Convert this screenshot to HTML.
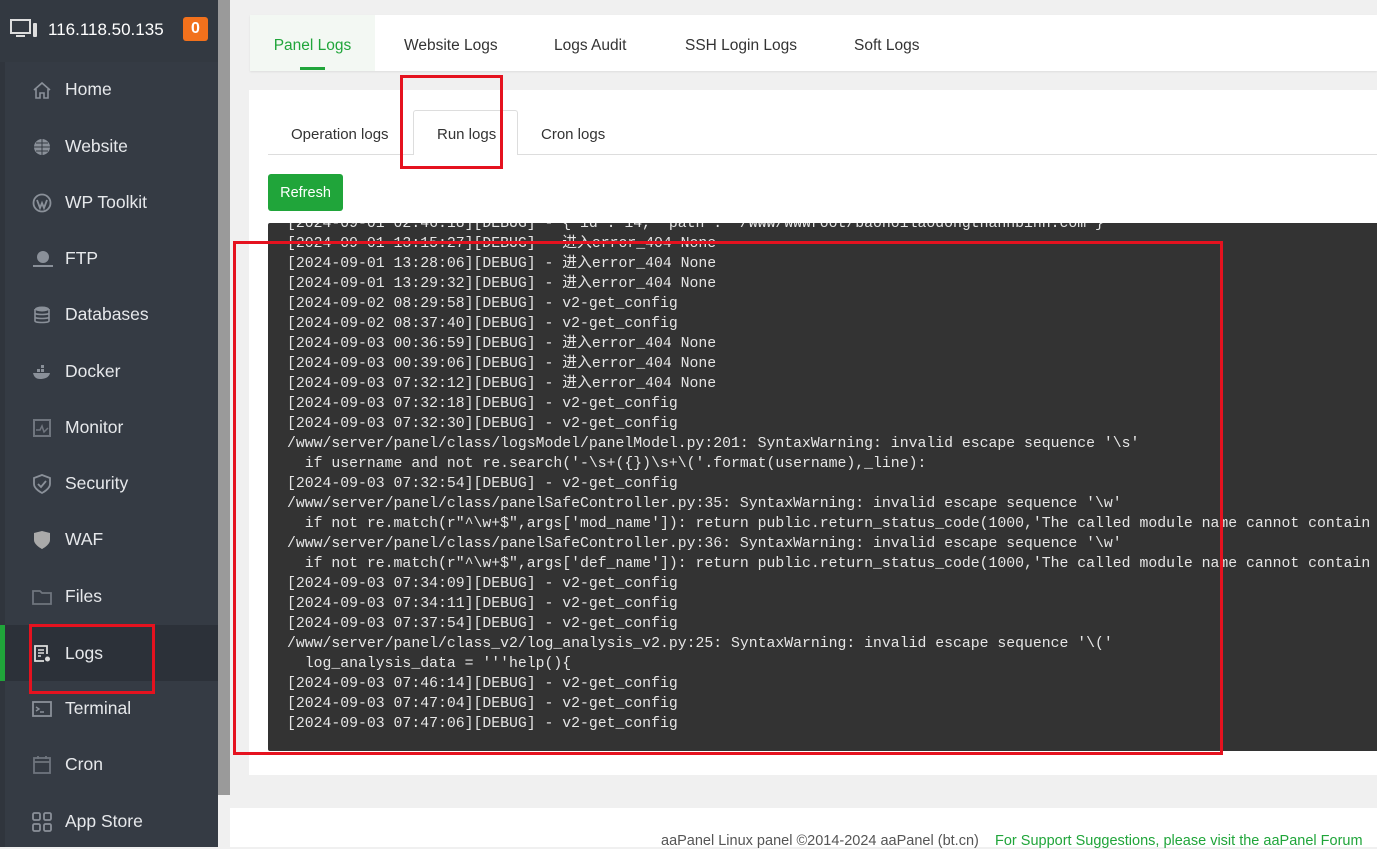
<!DOCTYPE html>
<html><head><meta charset="utf-8"><style>
*{margin:0;padding:0;box-sizing:border-box}
body{width:1377px;height:847px;overflow:hidden;background:#f0f0f0;font-family:"Liberation Sans","Noto Sans CJK SC",sans-serif;position:relative}
.side{position:absolute;left:0;top:0;width:218px;height:847px;background:#353b44}
.strip{position:absolute;left:0;top:62px;width:5px;height:785px;background:#30353d}
.hdr{position:absolute;left:0;top:0;width:218px;height:62px;background:#333941;color:#fff;font-size:17px}
.hdr .ip{position:absolute;left:48px;top:20px}
.badge{position:absolute;left:183px;top:17px;width:25px;height:24px;background:#f2711c;border-radius:3px;color:#fff;font-weight:bold;font-size:16px;text-align:center;line-height:24px}
.item{position:absolute;left:5px;width:213px;height:56px;color:#e6e8eb;font-size:17.5px}
.item span{position:absolute;left:60px;top:18px}
.item svg{position:absolute;left:27px;top:19px}
.item.act{background:#2c3139;left:0;width:218px;border-left:5px solid #20a53a}
.scroll{position:absolute;left:218px;top:0;width:12px;height:800px;background:#9a9a9a}
.scrollb{position:absolute;left:218px;top:795px;width:12px;height:52px;background:#f0f0f0}
.tabs{position:absolute;left:250px;top:15px;width:1127px;height:56px;background:#fff;box-shadow:0 1px 2px rgba(0,0,0,.08)}
.tabs div{position:absolute;top:0;height:56px;line-height:61px;font-size:15.5px;color:#333}
.card{position:absolute;left:249px;top:90px;width:1128px;height:685px;background:#fff}
.sub{position:absolute;font-size:15px;color:#333}
.log{position:absolute;left:268px;top:223px;width:1109px;height:528px;background:#333;overflow:hidden;border-radius:2px 0 0 2px}
.log pre{position:absolute;left:19px;top:-9px;font-family:"Liberation Mono","Noto Sans CJK SC",monospace;font-size:14.8px;line-height:20px;color:#e6e6e6;white-space:pre}
.red{position:absolute;border:3px solid #e5121f}
.foot{position:absolute;left:230px;top:808px;width:1147px;height:39px;background:#fff;font-size:14.5px;color:#555}
</style></head><body>
<div class="side"></div><div class="strip"></div>
<div class="hdr">
<svg style="position:absolute;left:10px;top:19px" width="28" height="20" viewBox="0 0 28 20"><rect x="1" y="1" width="19" height="13" fill="none" stroke="#ddd" stroke-width="2"/><rect x="6" y="16" width="9" height="2" fill="#ddd"/><rect x="23" y="4" width="4" height="14" rx="1" fill="#ddd"/></svg>
<span class="ip">116.118.50.135</span><div class="badge">0</div></div>

<div class="item" style="top:61px"><svg width="20" height="20" viewBox="0 0 20 20"><path d="M2 10 L10 3 L18 10 M4 9 V18 H8 V13 H12 V18 H16 V9" fill="none" stroke="#8a9099" stroke-width="1.6"/></svg><span>Home</span></div>
<div class="item" style="top:118px"><svg width="20" height="20" viewBox="0 0 20 20"><circle cx="10" cy="10" r="8" fill="#8a9099"/><path d="M2 10H18M10 2V18M4 6H16M4 14H16" stroke="#353b44" stroke-width="1"/></svg><span>Website</span></div>
<div class="item" style="top:174px"><svg width="20" height="20" viewBox="0 0 20 20"><circle cx="10" cy="10" r="8.5" fill="none" stroke="#8a9099" stroke-width="1.8"/><path d="M5 7 L8 15 L10 10 L12 15 L15 7" fill="none" stroke="#8a9099" stroke-width="1.8"/></svg><span>WP Toolkit</span></div>
<div class="item" style="top:230px"><svg width="22" height="20" viewBox="0 0 22 20"><circle cx="11" cy="8" r="6" fill="#8a9099"/><rect x="1" y="16" width="20" height="2" fill="#8a9099"/></svg><span>FTP</span></div>
<div class="item" style="top:286px"><svg width="20" height="20" viewBox="0 0 20 20"><ellipse cx="10" cy="4" rx="7" ry="2.5" fill="#8a9099"/><path d="M3 4V16C3 18 17 18 17 16V4M3 8C3 10 17 10 17 8M3 12C3 14 17 14 17 12" fill="none" stroke="#8a9099" stroke-width="1.6"/></svg><span>Databases</span></div>
<div class="item" style="top:343px"><svg width="20" height="20" viewBox="0 0 20 20"><path d="M1 11H18C17 16 12 17 8 17C4 17 2 15 1 11Z" fill="#8a9099"/><rect x="5" y="7" width="3" height="3" fill="#8a9099"/><rect x="9" y="7" width="3" height="3" fill="#8a9099"/><rect x="9" y="3" width="3" height="3" fill="#8a9099"/></svg><span>Docker</span></div>
<div class="item" style="top:399px"><svg width="20" height="20" viewBox="0 0 20 20"><rect x="2" y="2" width="16" height="16" fill="none" stroke="#6f757e" stroke-width="2"/><path d="M4 12L8 12L10 8L12 14L16 10" fill="none" stroke="#6f757e" stroke-width="1.5"/></svg><span>Monitor</span></div>
<div class="item" style="top:455px"><svg width="20" height="20" viewBox="0 0 20 20"><path d="M10 1L18 4V10C18 15 10 19 10 19C10 19 2 15 2 10V4Z" fill="none" stroke="#8a9099" stroke-width="1.8"/><path d="M6 10L9 13L14 7" fill="none" stroke="#8a9099" stroke-width="1.8"/></svg><span>Security</span></div>
<div class="item" style="top:511px"><svg width="20" height="20" viewBox="0 0 20 20"><path d="M10 1L18 3V10C18 15 10 19 10 19C10 19 2 15 2 10V3Z" fill="#aaa"/></svg><span>WAF</span></div>
<div class="item" style="top:568px"><svg width="20" height="20" viewBox="0 0 20 20"><path d="M1 4H8L10 6H19V17H1Z" fill="none" stroke="#6f757e" stroke-width="1.8"/></svg><span>Files</span></div>
<div class="item act" style="top:625px"><svg style="left:27px" width="20" height="20" viewBox="0 0 20 20"><path d="M12 17H3V2H15V10" fill="none" stroke="#ddd" stroke-width="1.8"/><path d="M6 6H12M6 9H12M6 12H9" stroke="#ddd" stroke-width="1.5"/><circle cx="15.5" cy="15" r="2.5" fill="#ddd"/></svg><span>Logs</span></div>
<div class="item" style="top:680px"><svg width="20" height="20" viewBox="0 0 20 20"><rect x="1" y="3" width="18" height="14" fill="none" stroke="#8a9099" stroke-width="1.8"/><path d="M4 8L7 10L4 12M8 13H12" fill="none" stroke="#8a9099" stroke-width="1.4"/></svg><span>Terminal</span></div>
<div class="item" style="top:736px"><svg width="20" height="20" viewBox="0 0 20 20"><rect x="2" y="3" width="16" height="15" fill="none" stroke="#6f757e" stroke-width="1.8"/><path d="M2 7H18M6 1V4M14 1V4" stroke="#6f757e" stroke-width="1.8"/></svg><span>Cron</span></div>
<div class="item" style="top:793px"><svg width="20" height="20" viewBox="0 0 20 20"><rect x="1" y="1" width="7" height="7" rx="1.5" fill="none" stroke="#8a9099" stroke-width="1.8"/><rect x="12" y="1" width="7" height="7" rx="1.5" fill="none" stroke="#8a9099" stroke-width="1.8"/><rect x="1" y="12" width="7" height="7" rx="1.5" fill="none" stroke="#8a9099" stroke-width="1.8"/><rect x="12" y="12" width="7" height="7" rx="1.5" fill="none" stroke="#8a9099" stroke-width="1.8"/></svg><span>App Store</span></div>

<div class="scroll"></div><div class="scrollb"></div>

<div class="tabs">
<div style="left:0;width:125px;background:#f3f8f3;color:#20a53a;text-align:center">Panel Logs<span style="position:absolute;left:50px;top:52px;width:25px;height:3px;background:#20a53a"></span></div>
<div style="left:154px">Website Logs</div>
<div style="left:304px">Logs Audit</div>
<div style="left:435px">SSH Login Logs</div>
<div style="left:604px">Soft Logs</div>
</div>

<div class="card"></div>
<div style="position:absolute;left:268px;top:154px;width:1109px;height:1px;background:#ddd"></div>
<div style="position:absolute;left:413px;top:110px;width:105px;height:45px;background:#fff;border:1px solid #ddd;border-bottom:none;border-radius:3px 3px 0 0"></div>
<div class="sub" style="left:291px;top:126px">Operation logs</div>
<div class="sub" style="left:437px;top:126px">Run logs</div>
<div class="sub" style="left:541px;top:126px">Cron logs</div>
<div style="position:absolute;left:268px;top:174px;width:75px;height:37px;background:#20a53a;border-radius:3px;color:#fff;font-size:14.5px;text-align:center;line-height:38px">Refresh</div>

<div class="log"><pre>[2024-09-01 02:46:18][DEBUG] - {'id': 14, 'path': '/www/wwwroot/baohoilaodongthanhbinh.com'}
[2024-09-01 13:15:27][DEBUG] - 进入error_404 None
[2024-09-01 13:28:06][DEBUG] - 进入error_404 None
[2024-09-01 13:29:32][DEBUG] - 进入error_404 None
[2024-09-02 08:29:58][DEBUG] - v2-get_config
[2024-09-02 08:37:40][DEBUG] - v2-get_config
[2024-09-03 00:36:59][DEBUG] - 进入error_404 None
[2024-09-03 00:39:06][DEBUG] - 进入error_404 None
[2024-09-03 07:32:12][DEBUG] - 进入error_404 None
[2024-09-03 07:32:18][DEBUG] - v2-get_config
[2024-09-03 07:32:30][DEBUG] - v2-get_config
/www/server/panel/class/logsModel/panelModel.py:201: SyntaxWarning: invalid escape sequence '\s'
  if username and not re.search('-\s+({})\s+\('.format(username),_line):
[2024-09-03 07:32:54][DEBUG] - v2-get_config
/www/server/panel/class/panelSafeController.py:35: SyntaxWarning: invalid escape sequence '\w'
  if not re.match(r"^\w+$",args['mod_name']): return public.return_status_code(1000,'The called module name cannot contain
/www/server/panel/class/panelSafeController.py:36: SyntaxWarning: invalid escape sequence '\w'
  if not re.match(r"^\w+$",args['def_name']): return public.return_status_code(1000,'The called module name cannot contain
[2024-09-03 07:34:09][DEBUG] - v2-get_config
[2024-09-03 07:34:11][DEBUG] - v2-get_config
[2024-09-03 07:37:54][DEBUG] - v2-get_config
/www/server/panel/class_v2/log_analysis_v2.py:25: SyntaxWarning: invalid escape sequence '\('
  log_analysis_data = '''help(){
[2024-09-03 07:46:14][DEBUG] - v2-get_config
[2024-09-03 07:47:04][DEBUG] - v2-get_config
[2024-09-03 07:47:06][DEBUG] - v2-get_config</pre></div>

<div class="foot"><span style="position:absolute;left:431px;top:25px">aaPanel Linux panel ©2014-2024 aaPanel (bt.cn)</span><span style="position:absolute;left:765px;top:25px;color:#20a53a">For Support Suggestions, please visit the aaPanel Forum</span></div>

<div class="red" style="left:400px;top:75px;width:103px;height:94px"></div>
<div class="red" style="left:233px;top:241px;width:990px;height:514px"></div>
<div class="red" style="left:29px;top:624px;width:126px;height:70px"></div>
</body></html>
